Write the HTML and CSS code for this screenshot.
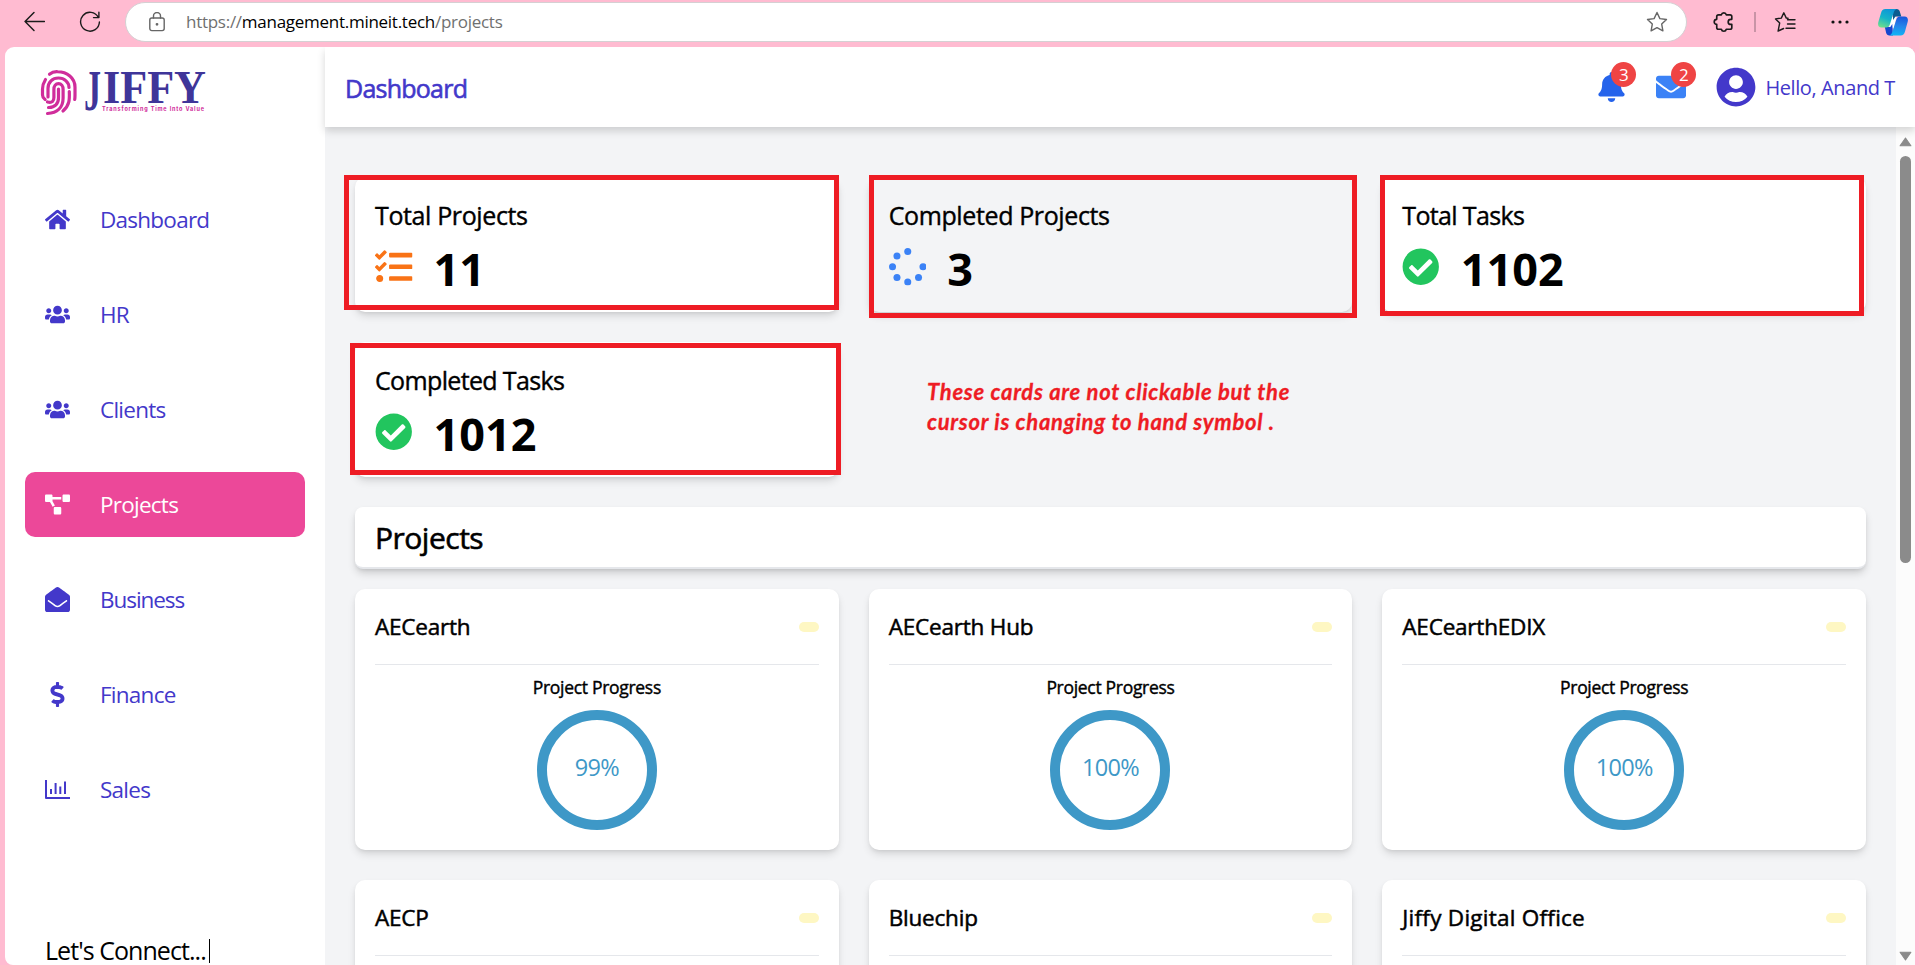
FILE: index.html
```html
<!DOCTYPE html>
<html lang="en">
<head>
<meta charset="utf-8">
<title>Jiffy - Projects</title>
<link rel="stylesheet" href="styles.css">
</head>
<body>
<svg class="defs" aria-hidden="true">
  <symbol id="i-home" viewBox="0 0 576 512"><path d="M280.37 148.26L96 300.11V464a16 16 0 0 0 16 16l112.06-.29a16 16 0 0 0 15.92-16V368a16 16 0 0 1 16-16h64a16 16 0 0 1 16 16v95.64a16 16 0 0 0 16 16.05L464 480a16 16 0 0 0 16-16V300L295.67 148.26a12.19 12.19 0 0 0-15.3 0zM571.6 251.47L488 182.56V44.05a12 12 0 0 0-12-12h-56a12 12 0 0 0-12 12v72.61L318.47 43a48 48 0 0 0-61 0L4.34 251.47a12 12 0 0 0-1.6 16.9l25.5 31A12 12 0 0 0 45.15 301l235.22-193.74a12.19 12.19 0 0 1 15.3 0L530.9 301a12 12 0 0 0 16.9-1.6l25.5-31a12 12 0 0 0-1.7-16.93z"/></symbol>
  <symbol id="i-users" viewBox="0 0 640 512"><path d="M96 224c35.3 0 64-28.7 64-64s-28.7-64-64-64-64 28.7-64 64 28.7 64 64 64zm448 0c35.3 0 64-28.7 64-64s-28.7-64-64-64-64 28.7-64 64 28.7 64 64 64zm32 32h-64c-17.6 0-33.5 7.1-45.1 18.6 40.3 22.1 68.9 62 75.1 109.4h66c17.7 0 32-14.3 32-32v-32c0-35.3-28.7-64-64-64zm-256 0c61.9 0 112-50.1 112-112S381.9 32 320 32 208 82.1 208 144s50.1 112 112 112zm76.8 32h-8.3c-20.8 10-43.9 16-68.5 16s-47.6-6-68.5-16h-8.3C179.6 288 128 339.6 128 403.2V432c0 26.5 21.5 48 48 48h288c26.5 0 48-21.5 48-48v-28.8c0-63.6-51.6-115.2-115.2-115.2zm-223.7-13.4C161.5 263.1 145.6 256 128 256H64c-35.3 0-64 28.7-64 64v32c0 17.7 14.3 32 32 32h65.9c6.3-47.4 34.9-87.3 75.2-109.4z"/></symbol>
  <symbol id="i-diagram" viewBox="0 0 640 512"><path d="M384 320H256c-17.67 0-32 14.33-32 32v128c0 17.67 14.33 32 32 32h128c17.67 0 32-14.33 32-32V352c0-17.67-14.33-32-32-32zM192 32c0-17.67-14.33-32-32-32H32C14.33 0 0 14.33 0 32v128c0 17.67 14.33 32 32 32h95.72l73.16 128.04C211.98 300.98 232.4 288 256 288h.28L192 175.51V128h224V64H192V32zM608 0H480c-17.67 0-32 14.33-32 32v128c0 17.67 14.33 32 32 32h128c17.67 0 32-14.33 32-32V32c0-17.67-14.33-32-32-32z"/></symbol>
  <symbol id="i-open" viewBox="0 0 512 512"><path d="M512 464c0 26.51-21.49 48-48 48H48c-26.51 0-48-21.49-48-48V200.724a48 48 0 0 1 18.387-37.776c24.913-19.529 45.501-35.365 164.2-121.511C199.412 29.17 232.797-.347 256 .003c23.198-.354 56.596 29.172 73.413 41.433 118.687 86.137 139.303 101.995 164.2 121.512A48 48 0 0 1 512 200.724V464zm-65.666-196.605c-2.563-3.728-7.7-4.595-11.339-1.907-22.845 16.873-55.462 40.705-105.582 77.079-16.825 12.266-50.21 41.781-73.413 41.43-23.211.344-56.559-29.143-73.413-41.43-50.114-36.37-82.734-60.204-105.582-77.079-3.639-2.688-8.776-1.821-11.339 1.907l-9.072 13.196a7.998 7.998 0 0 0 1.839 10.967c22.887 16.899 55.454 40.69 105.303 76.868 20.274 14.781 56.524 47.813 92.264 47.573 35.724.242 71.961-32.771 92.263-47.573 49.85-36.179 82.418-59.97 105.303-76.868a7.998 7.998 0 0 0 1.839-10.967l-9.071-13.196z"/></symbol>
  <symbol id="i-dollar" viewBox="0 0 288 512"><path d="M209.2 233.4l-108-31.6C88.7 198.2 80 186.5 80 173.5c0-16.3 13.2-29.5 29.5-29.5h66.3c12.2 0 24.2 3.7 34.2 10.5 6.1 4.1 14.3 3.1 19.5-2l34.8-34c7.1-6.9 6.1-18.4-1.8-24.5C238 74.8 207.4 64.1 176 64V16c0-8.8-7.2-16-16-16h-32c-8.8 0-16 7.2-16 16v48h-2.5C45.8 64-5.4 118.7.5 183.6c4.2 46.1 39.4 83.6 83.8 96.6l102.5 30c12.5 3.7 21.2 15.3 21.2 28.3 0 16.3-13.2 29.5-29.5 29.5h-66.3C100 368 88 364.3 78 357.5c-6.1-4.1-14.3-3.1-19.5 2l-34.8 34c-7.1 6.9-6.1 18.4 1.8 24.5 24.5 19.2 55.1 29.9 86.5 30v48c0 8.8 7.2 16 16 16h32c8.8 0 16-7.2 16-16v-48.2c46.6-.9 90.3-28.6 105.7-72.7 21.5-61.6-14.6-124.8-72.5-141.7z"/></symbol>
  <symbol id="i-chart" viewBox="0 0 25 25"><path d="M0 3h2V20h23v2H1a1 1 0 0 1-1-1zM5 12h2v5H5zM9.600 6h2v11h-2zM14.300 9.500h2v7.500h-2zM19 4.500h2v12.500h-2z"/></symbol>
  <symbol id="i-tasks" viewBox="0 0 512 512"><path d="M139.61 35.5a12 12 0 0 0-17 0L58.93 98.81l-22.7-22.12a12 12 0 0 0-17 0L3.53 92.41a12 12 0 0 0 0 17l47.59 47.4a12.78 12.78 0 0 0 17.61 0l15.59-15.62L156.52 69a12.09 12.09 0 0 0 .09-17zm0 159.19a12 12 0 0 0-17 0l-63.68 63.72-22.7-22.1a12 12 0 0 0-17 0L3.53 252a12 12 0 0 0 0 17L51 316.5a12.77 12.77 0 0 0 17.6 0l15.7-15.69 72.2-72.22a12 12 0 0 0 .09-16.9zM64 368c-26.49 0-48.59 21.5-48.59 48S37.53 464 64 464a48 48 0 0 0 0-96zm432 16H208a16 16 0 0 0-16 16v32a16 16 0 0 0 16 16h288a16 16 0 0 0 16-16v-32a16 16 0 0 0-16-16zm0-320H208a16 16 0 0 0-16 16v32a16 16 0 0 0 16 16h288a16 16 0 0 0 16-16V80a16 16 0 0 0-16-16zm0 160H208a16 16 0 0 0-16 16v32a16 16 0 0 0 16 16h288a16 16 0 0 0 16-16v-32a16 16 0 0 0-16-16z"/></symbol>
  <symbol id="i-spin" viewBox="0 0 512 512"><circle cx="256" cy="48" r="48"/><circle cx="256" cy="464" r="48"/><circle cx="48" cy="256" r="48"/><circle cx="464" cy="256" r="48"/><circle cx="108.900" cy="108.900" r="48"/><circle cx="403.100" cy="403.100" r="48"/><circle cx="108.900" cy="403.100" r="48"/></symbol>
  <symbol id="i-check" viewBox="0 0 512 512"><path d="M504 256c0 136.967-111.033 248-248 248S8 392.967 8 256 119.033 8 256 8s248 111.033 248 248zM227.314 387.314l184-184c6.248-6.248 6.248-16.379 0-22.627l-22.627-22.627c-6.248-6.249-16.379-6.249-22.628 0L216 308.118l-70.059-70.059c-6.248-6.248-16.379-6.248-22.628 0l-22.627 22.627c-6.248 6.248-6.248 16.379 0 22.627l104 104c6.249 6.249 16.379 6.249 22.628.001z"/></symbol>
  <symbol id="i-bell" viewBox="0 0 448 512"><path d="M224 512c35.32 0 63.97-28.65 63.97-64H160.03c0 35.35 28.65 64 63.97 64zm215.39-149.71c-19.32-20.76-55.47-51.99-55.47-154.29 0-77.7-54.48-139.9-127.94-155.16V32c0-17.67-14.32-32-31.98-32s-31.98 14.33-31.98 32v20.84C118.56 68.1 64.08 130.3 64.08 208c0 102.3-36.15 133.53-55.47 154.29-6 6.45-8.66 14.16-8.61 21.71.11 16.4 12.98 32 32.1 32h383.8c19.12 0 32-15.6 32.1-32 .05-7.55-2.61-15.27-8.61-21.71z"/></symbol>
  <symbol id="i-mail" viewBox="0 0 512 512"><path d="M502.3 190.8c3.9-3.1 9.7-.2 9.7 4.7V400c0 26.5-21.5 48-48 48H48c-26.5 0-48-21.5-48-48V195.600c0-5 5.7-7.800 9.700-4.700 22.400 17.400 52.100 39.500 154.100 113.600 21.100 15.400 56.700 47.800 92.200 47.600 35.700.3 72-32.800 92.300-47.600 102-74.100 131.600-96.300 154-113.700zM256 320c23.200.4 56.600-29.200 73.400-41.400 132.700-96.300 142.800-104.700 173.400-128.700 5.800-4.500 9.200-11.500 9.200-18.900v-19c0-26.500-21.500-48-48-48H48c-26.500 0-48 21.500-48 48v19c0 7.400 3.400 14.300 9.200 18.900 30.600 23.900 40.700 32.400 173.400 128.700 16.800 12.200 50.200 41.800 73.400 41.400z"/></symbol>
  <symbol id="i-user" viewBox="0 0 496 512"><path d="M248 8C111 8 0 119 0 256s111 248 248 248 248-111 248-248S385 8 248 8zm0 96c48.600 0 88 39.400 88 88s-39.400 88-88 88-88-39.400-88-88 39.400-88 88-88zm0 344c-58.700 0-111.300-26.600-146.500-68.200 18.800-35.400 55.600-59.800 98.500-59.800 2.400 0 4.800.4 7.100 1.100 13 4.200 26.600 6.900 40.900 6.900 14.300 0 28-2.700 40.900-6.900 2.300-.7 4.700-1.100 7.100-1.100 42.900 0 79.700 24.400 98.500 59.800C359.300 421.400 306.700 448 248 448z"/></symbol>
</svg>

<div class="browser">
  <div class="toolbar">
    <svg class="tb-back" viewBox="0 0 20 20"><path d="M19.500 10H1M9.500 1.500L1 10l8.500 8.500"/></svg>
    <svg class="tb-reload" viewBox="0 0 22 22"><path d="M19.300 6.300A9.400 9.400 0 1 0 20.400 11M19.900 1.200v5.400h-5.400"/></svg>
    <div class="address">
      <svg class="lock" viewBox="0 0 16 20"><rect x=".8" y="6" width="14.400" height="12.600" rx="2"/><path d="M4.500 6V4a3.500 3.500 0 0 1 7 0v2"/><circle cx="8" cy="12.300" r=".7"/></svg>
      <div class="url">https://<b>management.mineit.tech</b>/projects</div>
      <svg class="star" viewBox="0 0 22 22"><path d="M11 1.500l2.900 6.100 6.600.9-4.800 4.600 1.200 6.700-5.900-3.200-5.900 3.200 1.200-6.700L1.500 8.500l6.600-.9z"/></svg>
    </div>
    <svg class="puzzle" viewBox="0 0 20 20"><path d="M5 3.500H7.600a2.300 2.300 0 0 1 4.500 0h3.400a1.600 1.600 0 0 1 1.600 1.600V7.600h-1a2.300 2.300 0 1 0 0 4.600h1V15a1.600 1.600 0 0 1-1.600 1.600h-3.400a2.300 2.300 0 0 1-4.500 0H5A1.600 1.600 0 0 1 3.400 15v-2.800a2.300 2.300 0 0 1 0-4.600V5.100A1.600 1.600 0 0 1 5 3.500z"/></svg>
    <span class="tb-line"></span>
    <svg class="favs" viewBox="0 0 22 22"><path d="M14 7.300l-1.700-.2L9.800 1.800 7.300 7.100l-5.800.8 4.200 4-1.600 8.200 5.500-2.600M13.500 8.700H21M13.500 13H21M12 17.300h9"/></svg>
    <svg class="dots" viewBox="0 0 18 4"><circle cx="2" cy="2" r="1.600"/><circle cx="9" cy="2" r="1.600"/><circle cx="16" cy="2" r="1.600"/></svg>
    <svg class="copilot" viewBox="0 0 30 27">
      <defs>
        <linearGradient id="cg1" x1=".6" y1="0" x2=".2" y2="1"><stop offset="0" stop-color="#0e95d8"/><stop offset=".5" stop-color="#16b4c8"/><stop offset="1" stop-color="#6fe08a"/></linearGradient>
        <linearGradient id="cg2" x1=".6" y1="0" x2=".5" y2="1"><stop offset="0" stop-color="#1b56dc"/><stop offset=".5" stop-color="#2584ea"/><stop offset="1" stop-color="#12b4f5"/></linearGradient>
      </defs>
      <path fill="#fff" d="M12.500 8h6l-2.500 11h-5z"/>
      <path fill="#0b5c90" d="M15 0h3.500c2 0 2.800 1 3.300 2.500L23.300 7.600h-5.800L15 11z"/>
      <path fill="#1746cf" d="M15 26.500h-3.500c-2 0-2.800-1-3.300-2.500L6.800 18h5.500l2-3z"/>
      <path fill="url(#cg1)" d="M7.500 0H19c-2 .3-2.700 1.700-3.300 3.500L12 15c-.8 2.400-1.700 3.600-4 3.600H3.500C.5 18.600-.4 16 .3 13.300L3 4C3.700 1.500 5 0 7.500 0z"/>
      <path fill="url(#cg2)" d="M22.500 26.500H11c2-.3 2.700-1.700 3.300-3.500L18 11.500c.8-2.700 1.700-4 4-4h4.500c3 0 3.900 2.600 3.200 5.300L27 22.500c-.7 2.500-2 4-4.500 4z"/>
    </svg>
  </div>

  <div class="app">
    <aside class="sidebar">
      <svg class="logo" viewBox="0 0 170 50">
        <g class="print">
          <path d="M9.500 7.300C12 5.200 14.500 4.500 17.500 4.700c9.500.3 17.500 6 17.500 15.500v8c0 1.800 0 2.700-.3 4.300"/>
          <path d="M5.500 12.500C3.300 16 2.500 19 2.500 22v6c0 2 1 3.300 2.600 4.500"/>
          <path d="M8 30v-8.500c0-6.500 4.500-10.500 10.500-10.500S29 15.500 29 20.500"/>
          <path d="M29.300 24.500c.3 8 .3 14-6.300 19.500"/>
          <path d="M7.500 35c5 1.500 6.400-1.500 6.400-4.500v-8c0-3.500 1.800-5.800 4.600-5.800s4.600 2.300 4.600 5.800v8.500c0 9.500-6 15-15.600 15.500"/>
          <path d="M18.500 22v9c0 5.500-3.500 9.700-10 9.500"/>
        </g>
        <g class="word">
          <text x="44" y="42.500" font-size="56" textLength="17" lengthAdjust="spacingAndGlyphs">J</text>
          <text x="63" y="35.500" font-size="46" textLength="103" lengthAdjust="spacingAndGlyphs">IFFY</text>
        </g>
        <text class="tag" x="62" y="44" textLength="102" lengthAdjust="spacing">Transforming Time Into Value</text>
      </svg>
      <nav class="nav">
        <a class="nav-item"><svg class="ico"><use href="#i-home"/></svg>Dashboard</a>
        <a class="nav-item"><svg class="ico"><use href="#i-users"/></svg>HR</a>
        <a class="nav-item"><svg class="ico"><use href="#i-users"/></svg>Clients</a>
        <a class="nav-item active"><svg class="ico"><use href="#i-diagram"/></svg>Projects</a>
        <a class="nav-item tight"><svg class="ico"><use href="#i-open"/></svg>Business</a>
        <a class="nav-item"><svg class="ico"><use href="#i-dollar"/></svg>Finance</a>
        <a class="nav-item"><svg class="ico"><use href="#i-chart"/></svg>Sales</a>
      </nav>
      <div class="connect">Let's Connect...<i></i></div>
    </aside>

    <div class="body">
      <header class="header">
        <h1>Dashboard</h1>
        <div class="actions">
          <span class="bell"><svg><use href="#i-bell"/></svg><em>3</em></span>
          <span class="mail"><svg><use href="#i-mail"/></svg><em>2</em></span>
          <svg class="avatar"><use href="#i-user"/></svg>
          <span class="hello">Hello, Anand T</span>
        </div>
      </header>

      <div class="scroller">
        <main class="content">
          <section class="grid">
            <div class="stat"><h2>Total Projects</h2><div class="row orange"><svg><use href="#i-tasks"/></svg><strong>11</strong></div></div>
            <div class="stat hover"><h2>Completed Projects</h2><div class="row blue"><svg><use href="#i-spin"/></svg><strong>3</strong></div></div>
            <div class="stat"><h2 class="tight">Total Tasks</h2><div class="row green"><svg><use href="#i-check"/></svg><strong>1102</strong></div></div>
            <div class="stat"><h2 class="tight">Completed Tasks</h2><div class="row green"><svg><use href="#i-check"/></svg><strong>1012</strong></div></div>
          </section>
          <h2 class="section-title">Projects</h2>
          <section class="grid">
            <article class="card"><div class="card-head">AECearth<span class="pill"></span></div><p>Project Progress</p><div class="ring"><span>99%</span></div></article>
            <article class="card"><div class="card-head">AECearth Hub<span class="pill"></span></div><p>Project Progress</p><div class="ring"><span>100%</span></div></article>
            <article class="card"><div class="card-head">AECearthEDIX<span class="pill"></span></div><p>Project Progress</p><div class="ring"><span>100%</span></div></article>
            <article class="card"><div class="card-head">AECP<span class="pill"></span></div></article>
            <article class="card"><div class="card-head">Bluechip<span class="pill"></span></div></article>
            <article class="card"><div class="card-head wide">Jiffy Digital Office<span class="pill"></span></div></article>
          </section>
        </main>
        <div class="scrollbar">
          <svg viewBox="0 0 12 9"><path d="M6 .8L11 8H1z"/></svg>
          <span class="thumb"></span>
          <svg class="down" viewBox="0 0 12 9"><path d="M6 8.200L1 1h10z"/></svg>
        </div>
      </div>
    </div>
  </div>

  <!-- Review annotations drawn over the page -->
  <div class="mark m1"></div>
  <div class="mark m2"></div>
  <div class="mark m3"></div>
  <div class="mark m4"></div>
  <div class="note">These cards are not clickable but the<br>cursor is changing to hand symbol .</div>
</div>
</body>
</html>
```
FILE: styles.css
```css
* { box-sizing: border-box; margin: 0; padding: 0; }
body { font-family: "Open Sans", "Noto Sans", sans-serif; color: #000; overflow: hidden; }
.defs { position: absolute; width: 0; height: 0; }
svg { display: block; flex: none; fill: currentColor; }

.browser { position: relative; width: 1919px; height: 965px; background: #ffbbd1; display: flex; flex-direction: column; overflow: hidden; }

/* Browser toolbar */
.toolbar { height: 47px; flex: none; display: flex; align-items: center; padding: 0 11px 3px 24px; }
.toolbar svg { fill: none; stroke: #1b1b1b; stroke-width: 1.4; stroke-linecap: round; stroke-linejoin: round; }
.tb-back { width: 21px; height: 21px; margin-top: -2px; }
.toolbar .tb-reload { width: 22px; height: 22px; margin-left: 34px; }
.address { width: 1562px; height: 40px; margin-left: 24px; border-radius: 20px; background: #fff; border: 1px solid #d5d0d3; display: flex; align-items: center; padding: 0 18px 0 23px; }
.address svg { stroke: #666; }
.toolbar .lock { width: 16px; height: 20px; }
.toolbar .star { width: 22px; height: 22px; margin-left: auto; }
.url { margin: -1px 0 0 21px; font-size: 17px; letter-spacing: -0.27px; color: #707070; }
.url b { font-weight: 400; color: #000; }
.toolbar .puzzle { width: 22px; height: 22px; margin-left: 26px; stroke-width: 1.500; }
.tb-line { width: 2px; height: 20px; margin-left: 19px; background: #c894a6; }
.toolbar .favs { width: 22px; height: 22px; margin-left: 18px; }
.toolbar .dots { width: 18px; height: 4px; margin-left: 35px; fill: #111; stroke: none; }
.toolbar .copilot { width: 30px; height: 27px; margin-left: auto; stroke: none; }

/* App frame */
.app { flex: 1; min-height: 0; margin: 0 4px 0 5px; display: flex; background: #fff; border-radius: 9px 9px 0 8px; overflow: hidden; }
.sidebar { width: 320px; flex: none; display: flex; flex-direction: column; color: #4338ca; padding: 20px 20px 0; }
.logo { width: 170px; height: 50px; margin-left: 15px; overflow: visible; }
.print path { fill: none; stroke: #d02d9b; stroke-width: 3.200; stroke-linecap: round; }
.word { font-family: "Liberation Serif", serif; font-weight: 700; fill: #3f3599; }
.tag { font-family: Inter, sans-serif; font-weight: 700; font-size: 5.500px; fill: #d02d9b; }
.nav { display: flex; flex-direction: column; gap: 30px; margin-top: 70px; }
.nav-item { height: 65px; border-radius: 10px; padding: 0 20px; display: flex; align-items: center; gap: 30px; font-size: 22.5px; letter-spacing: -0.75px; }
.nav-item.active { background: #ec4899; color: #fff; }
.nav-item.tight { letter-spacing: -1.05px; }
.ico { width: 25px; height: 25px; }
.connect { margin: 111px 0 0 20px; font-size: 25px; line-height: 35px; letter-spacing: -0.95px; color: #000; white-space: nowrap; display: flex; align-items: center; }
.connect i { width: 1.500px; height: 24px; background: #000; margin-left: 3px; }

.body { flex: 1; min-width: 0; display: flex; flex-direction: column; background: #f3f4f6; }
.header { height: 80px; flex: none; background: #fff; display: flex; align-items: center; justify-content: space-between; padding: 0 20px; color: #4338ca; box-shadow: 0 4px 8px rgba(0,0,0,.16); z-index: 1; }
.header h1 { font-size: 25px; font-weight: 400; letter-spacing: -0.75px; margin-top: 1px; -webkit-text-stroke: .6px; }
.actions { display: flex; align-items: center; }
.bell, .mail { position: relative; }
.bell svg { width: 27px; height: 30px; color: #2563eb; }
.mail { margin-left: 31px; }
.mail svg { width: 30px; height: 30px; color: #3b82f6; }
.actions em { position: absolute; width: 25px; height: 25px; border-radius: 50%; background: #ef4444; color: #fff; font-style: normal; font-size: 17px; line-height: 25px; text-align: center; }
.bell em { left: 13px; top: -10px; }
.mail em { left: 15px; top: -10px; }
.avatar { width: 40px; height: 40px; margin-left: 30px; }
.hello { font-size: 20px; letter-spacing: -0.4px; margin-left: 9px; white-space: nowrap; }

.scroller { flex: 1; min-height: 0; display: flex; overflow: hidden; }
.content { flex: 1; padding: 50px 30px 0; }
.grid { display: grid; grid-template-columns: repeat(3, 1fr); gap: 30px; }
.stat { height: 135px; padding: 20px; background: #fff; border-radius: 10px; box-shadow: 0 5px 8px -1px rgba(0,0,0,.12), 0 2px 5px -2px rgba(0,0,0,.12); }
.stat.hover { background: #f3f4f6; }
.stat h2 { font-size: 25px; line-height: 37px; height: 35px; font-weight: 400; letter-spacing: -0.38px; -webkit-text-stroke: .4px; }
.stat h2.tight { letter-spacing: -0.65px; }
.row { display: flex; align-items: center; height: 50px; margin-top: 10px; }
.row svg { width: 37.5px; height: 37.5px; }
.row strong { margin: 3px 0 0 21px; font-size: 45px; line-height: 50px; font-weight: 700; color: #000; }
.orange { color: #f97316; }
.blue { color: #3b82f6; }
.green { color: #22c55e; }

.section-title { height: 62px; margin: 30px 0 20px; padding: 10px 20px; background: #fff; border-bottom: 2px solid #e5e7eb; border-radius: 8px; font-size: 30px; line-height: 41px; font-weight: 400; letter-spacing: -0.5px; -webkit-text-stroke: .6px; box-shadow: 0 5px 8px -1px rgba(0,0,0,.16), 0 2px 5px -2px rgba(0,0,0,.14); }
.card { height: 261px; padding: 20px; background: #fff; border-radius: 10px; box-shadow: 0 5px 8px -1px rgba(0,0,0,.12), 0 2px 5px -2px rgba(0,0,0,.12); display: flex; flex-direction: column; align-items: center; }
.card-head { width: 100%; height: 56px; flex: none; border-bottom: 1px solid #e5e7eb; display: flex; justify-content: space-between; font-size: 22.5px; line-height: 35px; letter-spacing: -0.2px; -webkit-text-stroke: .5px; }
.card-head.wide { letter-spacing: .25px; }
.pill { width: 20px; height: 10px; margin-top: 13px; border-radius: 5px; background: #fef7c3; }
.card p { margin-top: 10px; font-size: 17.5px; line-height: 25px; letter-spacing: -0.3px; -webkit-text-stroke: .4px; }
.ring { width: 120px; height: 120px; flex: none; margin-top: 10px; border: 10px solid #3e98c7; border-radius: 50%; display: flex; align-items: center; justify-content: center; color: #3e98c7; font-size: 23.500px; letter-spacing: -0.7px; padding-bottom: 7px; }

.scrollbar { width: 19px; flex: none; background: #fcfcfc; display: flex; flex-direction: column; align-items: center; padding: 10px 0 4px; color: #8b8b8b; }
.scrollbar svg { width: 13px; height: 10px; stroke: #8b8b8b; stroke-linejoin: round; }
.thumb { width: 11px; height: 407px; margin-top: 9px; border-radius: 6px; background: #8b8b8b; }
.scrollbar .down { margin-top: auto; }

/* Annotations */
.mark { position: absolute; border: 5px solid #ee1c24; }
.m1 { left: 344px; top: 175px; width: 495px; height: 135px; }
.m2 { left: 869px; top: 175px; width: 488px; height: 143px; }
.m3 { left: 1380px; top: 175px; width: 484px; height: 141px; }
.m4 { left: 350px; top: 343px; width: 491px; height: 132px; }
.note { position: absolute; left: 927px; top: 377px; font: italic 700 22px/29.500px Lato, sans-serif; letter-spacing: .72px; color: #ee1c24; white-space: nowrap; -webkit-text-stroke: .3px; }
```
